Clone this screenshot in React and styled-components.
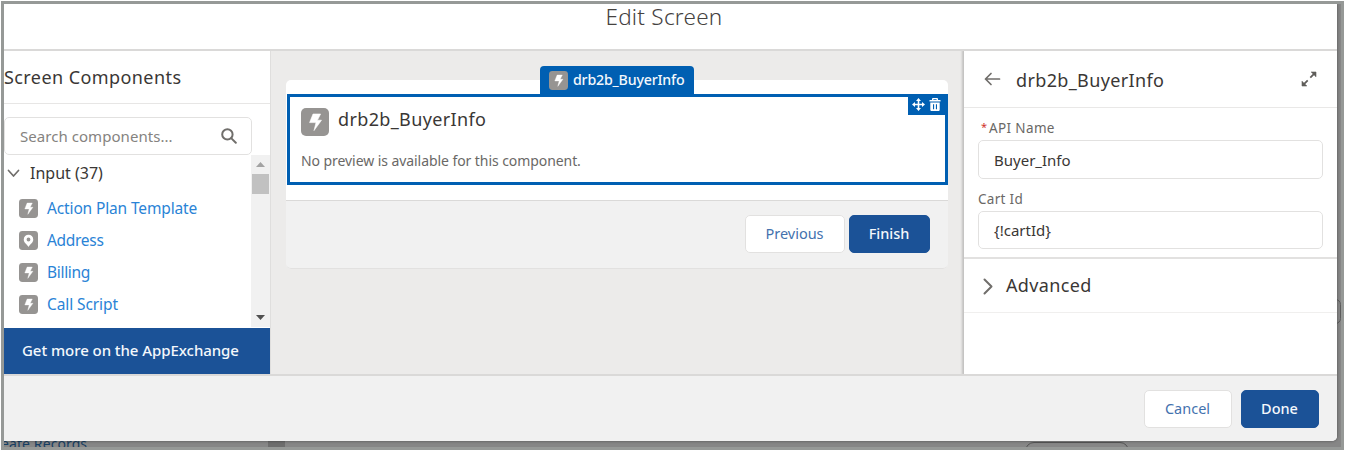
import React from "react";
import styled, { createGlobalStyle } from "styled-components";

const GlobalStyle = createGlobalStyle`
  * { box-sizing: border-box; }
  body {
    margin: 0;
    background: #fff;
    overflow: hidden;
    font-family: "Noto Sans", "Open Sans", sans-serif;
    color: #3a3735;
  }
`;

const Frame = styled.div`
  position: relative;
  width: 1343px;
  height: 449px;
  margin: 1px;
  border: 3px solid #969997;
  background: #868686;
  overflow: hidden;
`;

const Modal = styled.div`
  position: relative;
  display: flex;
  flex-direction: column;
  width: 1333px;
  height: 437px;
  background: #fff;
  border-radius: 0 0 5px 0;
  overflow: hidden;
  box-shadow: 0 0 3px rgba(0, 0, 0, 0.45);
`;

const Behind = styled.div`
  display: flex;
  height: 6px;
  overflow: hidden;
`;

const BehindText = styled.div`
  width: 267px;
  margin-top: -5px;
  margin-left: -3px;
  font-size: 14px;
  line-height: 16px;
  letter-spacing: 0.1px;
  color: #173f63;
`;

const BehindBar = styled.div`
  width: 17px;
  margin-right: 740px;
  background: #6d6d6d;
`;

const BehindPill = styled.div`
  width: 104px;
  height: 20px;
  margin-top: 1px;
  border: 1px solid #555;
  border-radius: 9px;
`;

const EdgePill = styled.div`
  position: absolute;
  left: 1326px;
  top: 295px;
  width: 11px;
  height: 25px;
  border: 1px solid #5c5c5c;
  border-radius: 8px;
`;

const Text = styled.span`
  display: block;
  white-space: nowrap;
  font-size: ${(p) => p.$size}px;
  line-height: ${(p) => p.$line || 20}px;
  letter-spacing: ${(p) => p.$track || 0}px;
  font-weight: ${(p) => p.$weight || 400};
  color: ${(p) => p.$color || "inherit"};
`;

const Header = styled.header`
  display: flex;
  justify-content: center;
  flex: 0 0 47px;
  padding-right: 13px;
  border-bottom: 2px solid #dad9d8;
`;

const Body = styled.div`
  display: flex;
  flex: 0 0 323px;
  overflow: hidden;
`;

const Footer = styled.footer`
  display: flex;
  flex: 1;
  justify-content: flex-end;
  gap: 9px;
  padding: 14px 18px 0 0;
  border-top: 2px solid #dad9d8;
  background: #f1f1f1;
`;

const Sidebar = styled.aside`
  display: flex;
  flex-direction: column;
  width: 266px;
  background: #fff;
`;

const SidebarTitle = styled.div`
  flex: 0 0 53px;
  padding: 16px 0 0 0;
  border-bottom: 1px solid #e7e6e5;
`;

const SearchBox = styled.div`
  display: flex;
  align-items: center;
  justify-content: space-between;
  flex: 0 0 38px;
  width: 248px;
  margin-top: 13px;
  padding: 0 14px 0 15px;
  border: 1px solid #e2e1e0;
  border-radius: 5px;
`;

const ListArea = styled.div`
  display: flex;
  flex: 1;
`;

const List = styled.div`
  flex: 1;
  padding: 8px 0 0 3px;
`;

const GroupRow = styled.div`
  display: flex;
  align-items: center;
  gap: 10px;
  height: 20px;
  margin-bottom: 9px;
`;

const ItemRow = styled.div`
  display: flex;
  align-items: center;
  gap: 9px;
  height: 32px;
  padding-left: 12px;

  & > svg { margin-top: 1px; }
`;

const Scrollbar = styled.div`
  display: flex;
  flex-direction: column;
  align-items: center;
  width: 19px;
  padding: 7px 0;
  background: #f1f1f1;
`;

const Thumb = styled.div`
  width: 17px;
  height: 20px;
  margin: 7px 0 auto;
  background: #c1c1c1;
`;

const ExchangeBar = styled.div`
  display: flex;
  align-items: center;
  flex: 0 0 46px;
  margin-top: 1px;
  padding: 0 0 2px 18px;
  background: #1b5297;
`;

const Canvas = styled.main`
  flex: 1;
  padding: 29px 0 0 15px;
  background: #ecebea;
  border-left: 1px solid #dfdedd;
`;

const ScreenCard = styled.div`
  width: 662px;
  height: 189px;
  padding-top: 14px;
  background: #fff;
  border-radius: 5px;
`;

const Selected = styled.section`
  position: relative;
  height: 91px;
  margin-left: 1px;
  padding: 11px 11px 0;
  border: 3px solid #005fb2;
`;

const SelectedHead = styled.div`
  display: flex;
  gap: 9px;
  height: 43px;
`;

const Tab = styled.div`
  position: absolute;
  left: 250px;
  top: -31px;
  display: flex;
  align-items: center;
  gap: 5px;
  width: 154px;
  height: 29px;
  padding: 0 0 1px 9px;
  border-radius: 4px 4px 0 0;
  background: #005fb2;
`;

const Actions = styled.div`
  position: absolute;
  right: -3px;
  top: -3px;
  display: flex;
  align-items: center;
  gap: 4px;
  width: 40px;
  height: 21px;
  padding-left: 4px;
  background: #005fb2;
`;

const CardFooter = styled.div`
  display: flex;
  justify-content: flex-end;
  gap: 4px;
  height: 69px;
  margin-top: 15px;
  padding: 14px 18px 0 0;
  border-top: 1px solid #dad9d8;
  border-bottom: 1px solid #e2e1e0;
  border-radius: 0 0 5px 5px;
  background: #f1f1f1;
`;

const Button = styled.button`
  width: ${(p) => p.$w}px;
  height: 38px;
  padding: 0 1px 2px 0;
  border: 1px solid ${(p) => (p.$brand ? "#1b5297" : "#e2e1e0")};
  border-radius: 5px;
  background: ${(p) => (p.$brand ? "#1b5297" : "#fff")};
  color: ${(p) => (p.$brand ? "#f4f8fc" : "#4472ae")};
  font: ${(p) => (p.$brand ? 500 : 400)} 14.5px/20px "Noto Sans", sans-serif;
  letter-spacing: ${(p) => p.$track || 0}px;
`;

const Properties = styled.aside`
  position: relative;
  width: 373px;
  background: #fff;
  box-shadow: -1px 0 2px 1px rgba(0, 0, 0, 0.18);
`;

const PropHeader = styled.div`
  display: flex;
  align-items: center;
  height: 57px;
  padding: 0 20px 0 20px;
  border-bottom: 1px solid #e9e8e7;

  & > :last-child { margin-left: auto; }
`;

const BackTitle = styled.div`
  display: flex;
  align-items: center;
  gap: 15px;

  & > span { padding-top: 1px; }
`;

const Fields = styled.div`
  height: 151px;
  padding: 10px 14px 0;
  border-bottom: 2px solid #e2e1e0;
`;

const Label = styled.label`
  display: flex;
  gap: 2px;
  height: 22px;
  padding-left: ${(p) => (p.$required ? 3 : 0)}px;
`;

const Input = styled.div`
  display: flex;
  align-items: center;
  height: ${(p) => p.$h}px;
  margin-bottom: 10px;
  padding-left: 15px;
  border: 1px solid #e2e1e0;
  border-radius: 5px;
`;

const Section = styled.div`
  display: flex;
  align-items: center;
  gap: 13px;
  height: 54px;
  padding: 0 0 1px 19px;
  border-bottom: 1px solid #f0efee;

  & > svg { margin-top: 2px; }
`;

function BoltIcon({ size }) {
  return (
    <svg width={size} height={size} viewBox="0 0 28 28">
      <rect width="28" height="28" rx="5" fill="#969492" />
      <path d="M12 6h7.6l-3.2 6.2h4.1L13 22.6l2-8H8.6z" fill="#fff" stroke="#fff" strokeWidth=".6" strokeLinejoin="round" />
    </svg>
  );
}

function PinIcon({ size }) {
  return (
    <svg width={size} height={size} viewBox="0 0 28 28">
      <rect width="28" height="28" rx="5" fill="#969492" />
      <path fillRule="evenodd" d="M14 5.5a7 7 0 0 0-7 7c0 5 5 7 7 11 2-4 7-6 7-11a7 7 0 0 0-7-7zm0 4.2a2.8 2.8 0 1 1 0 5.6 2.8 2.8 0 0 1 0-5.6z" fill="#fff" />
    </svg>
  );
}

const Stroke = ({ w, h, d, color = "#706e6b", width = 1.7 }) => (
  <svg width={w} height={h} viewBox={`0 0 ${w} ${h}`} fill="none" stroke={color} strokeWidth={width} strokeLinecap="round" strokeLinejoin="round">
    <path d={d} />
  </svg>
);

const SearchIcon = () => (
  <svg width="16" height="16" viewBox="0 0 16 16" fill="none" stroke="#706e6b" strokeWidth="2" strokeLinecap="round">
    <circle cx="6.4" cy="6.4" r="5.2" />
    <path d="M10.4 10.4l4.4 4.4" />
  </svg>
);

const ExpandIcon = () => (
  <svg width="16" height="16" viewBox="0 0 16 16" fill="#605e5b" stroke="#605e5b" strokeLinejoin="round">
    <path d="M9.3 6.7l4-4M6.7 9.3l-4 4" strokeWidth="1.8" />
    <path d="M10.2 1H15v4.8zM1 10.2V15h4.8z" strokeWidth=".6" />
  </svg>
);

const MoveIcon = () => (
  <svg width="13" height="13" viewBox="0 0 13 13" fill="#fff">
    <path d="M6.5 0L9 3H7.3v2.7H10V4l3 2.5L10 9V7.3H7.3V10H9l-2.5 3L4 10h1.7V7.3H3V9L0 6.5 3 4v1.7h2.7V3H4z" />
  </svg>
);

const TrashIcon = () => (
  <svg width="12" height="13" viewBox="0 0 12 13" fill="#fff">
    <path d="M4 0h4a1 1 0 0 1 1 1v1h2.5v1.6H.5V2H3V1a1 1 0 0 1 1-1zm.4 1.2V2h3.2v-.8z" fillRule="evenodd" />
    <path d="M1.3 4.6h9.4v7.2a1.2 1.2 0 0 1-1.2 1.2h-7a1.2 1.2 0 0 1-1.2-1.2zM4 6.3v5h1.1v-5zm2.9 0v5H8v-5z" fillRule="evenodd" />
  </svg>
);

const Arrow = ({ down }) => (
  <svg width="9" height="5" viewBox="0 0 9 5">
    <path d={down ? "M0 0h9L4.5 5z" : "M0 5h9L4.5 0z"} fill={down ? "#505050" : "#a3a3a3"} />
  </svg>
);

const items = [
  { name: "Action Plan Template", Icon: BoltIcon, track: -0.14 },
  { name: "Address", Icon: PinIcon, track: -0.3 },
  { name: "Billing", Icon: BoltIcon, track: -0.3 },
  { name: "Call Script", Icon: BoltIcon, track: -0.1 },
];

export default function App() {
  return (
    <>
      <GlobalStyle />
      <Frame>
        <EdgePill />
        <Modal>
          <Header>
            <Text $size={22.5} $line={25} $track={0.25} $weight={300} $color="#45423f">Edit Screen</Text>
          </Header>
          <Body>
            <Sidebar>
              <SidebarTitle>
                <Text $size={18} $track={0.42}>Screen Components</Text>
              </SidebarTitle>
              <SearchBox>
                <Text $size={15} $track={0.05} $color="#858380">Search components...</Text>
                <SearchIcon />
              </SearchBox>
              <ListArea>
                <List>
                  <GroupRow>
                    <Stroke w={13} h={9} d="M1.5 1.5l5 5.5 5-5.5" />
                    <Text $size={16}>Input (37)</Text>
                  </GroupRow>
                  {items.map(({ name, Icon, track }) => (
                    <ItemRow key={name}>
                      <Icon size={19} />
                      <Text $size={15.5} $track={track} $color="#2a83d6">{name}</Text>
                    </ItemRow>
                  ))}
                </List>
                <Scrollbar>
                  <Arrow />
                  <Thumb />
                  <Arrow down />
                </Scrollbar>
              </ListArea>
              <ExchangeBar>
                <Text $size={15} $track={-0.06} $weight={500} $color="#f4f8fc">Get more on the AppExchange</Text>
              </ExchangeBar>
            </Sidebar>
            <Canvas>
              <ScreenCard>
                <Selected>
                  <Tab>
                    <BoltIcon size={19} />
                    <Text $size={14.2} $track={-0.18} $weight={500} $color="#f4f8fc">drb2b_BuyerInfo</Text>
                  </Tab>
                  <SelectedHead>
                    <BoltIcon size={28} />
                    <Text $size={18} $line={23} $track={0.36}>drb2b_BuyerInfo</Text>
                  </SelectedHead>
                  <Text $size={14} $track={-0.07} $color="#6a6866">No preview is available for this component.</Text>
                  <Actions>
                    <MoveIcon />
                    <TrashIcon />
                  </Actions>
                </Selected>
                <CardFooter>
                  <Button $w={100}>Previous</Button>
                  <Button $w={81} $brand>Finish</Button>
                </CardFooter>
              </ScreenCard>
            </Canvas>
            <Properties>
              <PropHeader>
                <BackTitle>
                  <Stroke w={17} h={14} d="M15.5 7H1.5M7 1.5L1.5 7 7 12.5" />
                  <Text $size={18} $track={0.36}>drb2b_BuyerInfo</Text>
                </BackTitle>
                <ExpandIcon />
              </PropHeader>
              <Fields>
                <Label $required>
                  <Text $size={11} $line={18} $color="#d0342c">*</Text>
                  <Text $size={13.5} $track={0.35} $color="#6a6866">API Name</Text>
                </Label>
                <Input $h={39}>
                  <Text $size={15}>Buyer_Info</Text>
                </Input>
                <Label>
                  <Text $size={13.5} $track={0.3} $color="#6a6866">Cart Id</Text>
                </Label>
                <Input $h={38}>
                  <Text $size={15}>{"{!cartId}"}</Text>
                </Input>
              </Fields>
              <Section>
                <Stroke w={10} h={17} d="M1.5 1.5l7 7-7 7" width={2} />
                <Text $size={18} $track={0.36}>Advanced</Text>
              </Section>
            </Properties>
          </Body>
          <Footer>
            <Button $w={88}>Cancel</Button>
            <Button $w={78} $brand>Done</Button>
          </Footer>
        </Modal>
        <Behind>
          <BehindText>eate Records</BehindText>
          <BehindBar />
          <BehindPill />
        </Behind>
      </Frame>
    </>
  );
}
